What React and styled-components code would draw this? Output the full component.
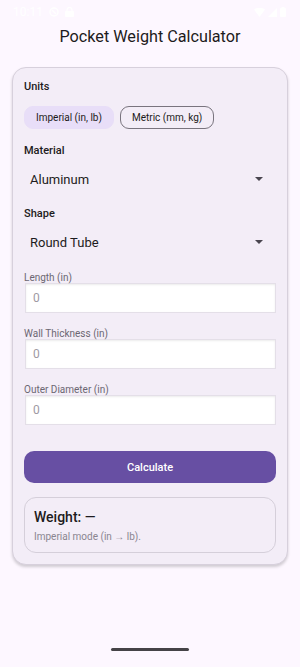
import styled, { createGlobalStyle } from "styled-components";

const GlobalStyle = createGlobalStyle`
  html, body {
    margin: 0;
    padding: 0;
    background: #fdf7ff;
    font-family: Roboto, "Noto Sans", sans-serif;
    color: #1d1b20;
  }
`;

const Screen = styled.div`
  width: 300px;
  height: 667px;
  display: flex;
  flex-direction: column;
  background: #fdf7ff;
  overflow: hidden;
`;

const StatusBar = styled.div`
  height: 24px;
  display: flex;
  align-items: center;
  justify-content: space-between;
  padding: 0 14px 0 13px;
  color: #ffffff;
  font-size: 12px;
`;

const StatusLeft = styled.div`
  display: flex;
  align-items: center;
  gap: 6px;
`;

const StatusRight = styled.div`
  display: flex;
  align-items: center;
  gap: 3px;
`;

const Title = styled.h1`
  margin: 2px 0 0;
  height: 22px;
  font-size: 16.2px;
  font-weight: 400;
  text-align: center;
  line-height: 22px;
  color: #1d1b20;
`;

const Card = styled.div`
  margin: 19px 12px 0;
  padding: 12px 11px 11px;
  background: #f3edf7;
  border: 1px solid #d7d0dc;
  border-radius: 14px;
  box-shadow: 0 2px 3px rgba(0, 0, 0, 0.18);
  display: flex;
  flex-direction: column;
`;

const SectionLabel = styled.div`
  font-size: 11px;
  font-weight: 500;
  line-height: 14px;
  color: #1d1b20;
  margin-top: ${(p) => p.$top || 0}px;
`;

const ChipRow = styled.div`
  display: flex;
  gap: 6px;
  margin-top: 12px;
`;

const Chip = styled.div`
  height: 23px;
  box-sizing: border-box;
  padding: 0 11px;
  display: flex;
  align-items: center;
  border-radius: 9px;
  font-size: 10px;
  color: #1d1b20;
  background: ${(p) => (p.$active ? "#e8def8" : "transparent")};
  border: 1px solid ${(p) => (p.$active ? "#e8def8" : "#79747e")};
`;

const Select = styled.div`
  height: 36px;
  display: flex;
  align-items: center;
  justify-content: space-between;
  padding: 0 13px 0 6px;
  margin-top: 3px;
  font-size: 13px;
  color: #1d1b20;
`;

const Caret = styled.span`
  width: 0;
  height: 0;
  border-left: 4px solid transparent;
  border-right: 4px solid transparent;
  border-top: 4px solid #49454f;
`;

const FieldLabel = styled.div`
  font-size: 10px;
  line-height: 14px;
  color: #6c6772;
  margin-top: ${(p) => p.$top || 0}px;
`;

const Input = styled.div`
  margin: -2px 0 0 1px;
  height: 30px;
  box-sizing: border-box;
  background: #ffffff;
  border: 1px solid #e4dfe8;
  box-shadow: inset 0 1px 2px rgba(0, 0, 0, 0.08);
  display: flex;
  align-items: center;
  padding-left: 7px;
  font-size: 12px;
  color: #9e99a3;
`;

const Button = styled.button`
  margin-top: 26px;
  height: 32px;
  border: none;
  border-radius: 10px;
  background: #674fa3;
  color: #ffffff;
  font-family: Roboto, "Noto Sans", sans-serif;
  font-size: 11px;
  font-weight: 500;
`;

const Result = styled.div`
  margin-top: 14px;
  height: 56px;
  box-sizing: border-box;
  border: 1px solid #d5cfda;
  border-radius: 12px;
  padding: 10px 9px;
  display: flex;
  flex-direction: column;
`;

const Weight = styled.div`
  font-size: 14px;
  font-weight: 500;
  line-height: 18px;
  color: #1d1b20;
`;

const Note = styled.div`
  margin-top: 4px;
  font-size: 10px;
  line-height: 13px;
  color: #8a8590;
`;

const NavBar = styled.div`
  margin-top: auto;
  height: 19px;
  display: flex;
  justify-content: center;
`;

const Handle = styled.div`
  width: 78px;
  height: 3px;
  border-radius: 2px;
  background: #454347;
`;

const fields = ["Length (in)", "Wall Thickness (in)", "Outer Diameter (in)"];

export default function App() {
  return (
    <Screen>
      <GlobalStyle />
      <StatusBar>
        <StatusLeft>
          <span>10:11</span>
          <svg width="10" height="10" viewBox="0 0 10 10">
            <circle cx="5" cy="5" r="4" fill="none" stroke="#fff" strokeWidth="1.4" />
            <path d="M3 3l4 4" stroke="#fff" strokeWidth="1.4" />
          </svg>
          <svg width="9" height="10" viewBox="0 0 9 10">
            <rect x="0" y="4" width="9" height="6" rx="1" fill="#fff" />
            <path d="M2 4V3a2.5 2.5 0 0 1 5 0v1" fill="none" stroke="#fff" strokeWidth="1.2" />
          </svg>
        </StatusLeft>
        <StatusRight>
          <svg width="11" height="9" viewBox="0 0 11 9">
            <path d="M0 1.5Q5.5 -2 11 1.5L5.5 9Z" fill="#fff" />
          </svg>
          <svg width="9" height="9" viewBox="0 0 9 9">
            <path d="M9 0V9H0Z" fill="#fff" />
          </svg>
          <svg width="6" height="10" viewBox="0 0 6 10">
            <rect x="0" y="1" width="6" height="9" rx="1" fill="#fff" />
            <rect x="1.5" y="0" width="3" height="1.5" fill="#fff" />
          </svg>
        </StatusRight>
      </StatusBar>

      <Title>Pocket Weight Calculator</Title>

      <Card>
        <SectionLabel>Units</SectionLabel>
        <ChipRow>
          <Chip $active>Imperial (in, lb)</Chip>
          <Chip>Metric (mm, kg)</Chip>
        </ChipRow>

        <SectionLabel $top={15}>Material</SectionLabel>
        <Select>
          <span>Aluminum</span>
          <Caret />
        </Select>

        <SectionLabel $top={10}>Shape</SectionLabel>
        <Select>
          <span>Round Tube</span>
          <Caret />
        </Select>

        {fields.map((f, i) => (
          <div key={f}>
            <FieldLabel $top={i === 0 ? 11 : 14}>{f}</FieldLabel>
            <Input>0</Input>
          </div>
        ))}

        <Button>Calculate</Button>

        <Result>
          <Weight>Weight: —</Weight>
          <Note>Imperial mode (in → lb).</Note>
        </Result>
      </Card>

      <NavBar>
        <Handle />
      </NavBar>
    </Screen>
  );
}
